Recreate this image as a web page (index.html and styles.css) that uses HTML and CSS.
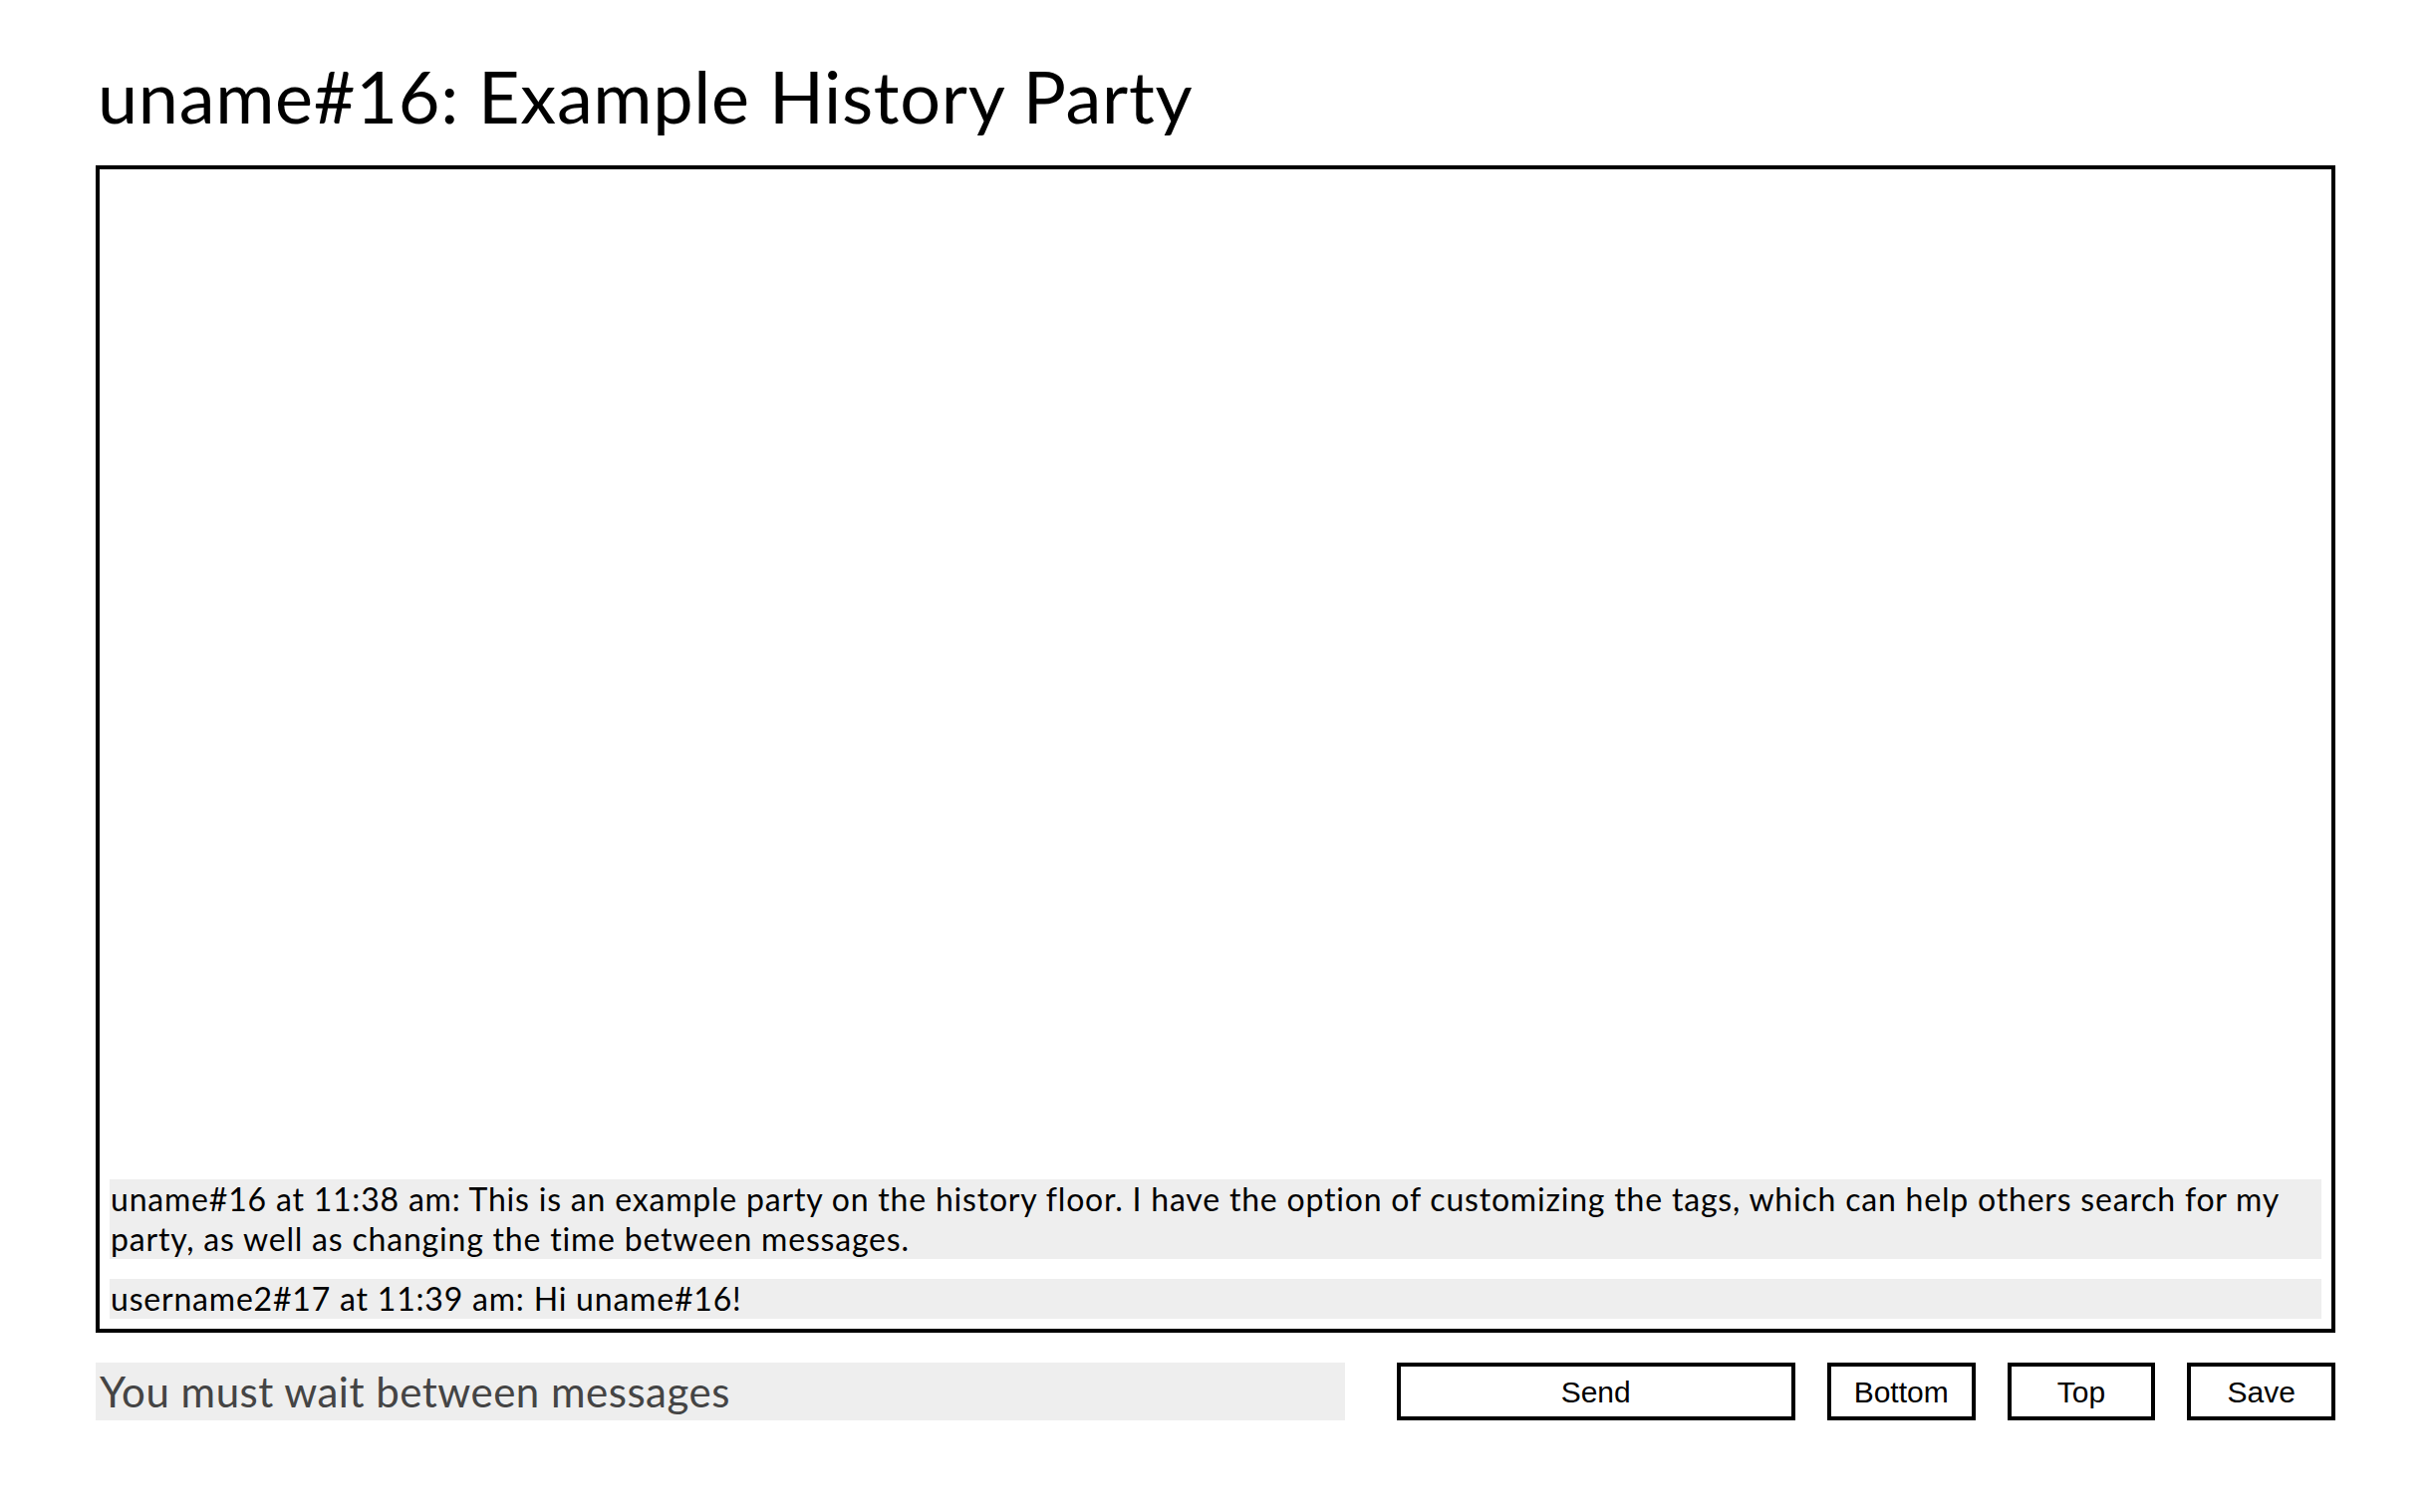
FILE: index.html
```html
<!DOCTYPE html>
<html lang="en">
<head>
<meta charset="utf-8">
<title>uname#16: Example History Party</title>
<link rel="stylesheet" href="styles.css">
</head>
<body>
<main class="page">
  <h1 class="title">uname#16: Example History Party</h1>
  <section class="chat">
    <div class="msg">uname#16 at 11:38 am: This is an example party on the history floor. I have the option of customizing the tags, which can help others search for my party, as well as changing the time between messages.</div>
    <div class="msg">username2#17 at 11:39 am: Hi uname#16!</div>
  </section>
  <div class="controls">
    <div class="entry">You must wait between messages</div>
    <button class="btn btn-send">Send</button>
    <button class="btn">Bottom</button>
    <button class="btn">Top</button>
    <button class="btn">Save</button>
  </div>
</main>
</body>
</html>
```

FILE: styles.css
```css
html, body {
  margin: 0;
  padding: 0;
  background: #fff;
}

.page {
  width: 2248px;
  margin-left: 96px;
  font-family: Lato, "Noto Sans", sans-serif;
  color: #000;
}

.title {
  margin: 0;
  padding-top: 54px;
  padding-left: 2px;
  height: 166px;
  box-sizing: border-box;
  font-size: 72px;
  font-weight: 400;
  line-height: 84px;
  letter-spacing: 0.7px;
}

.chat {
  height: 1172px;
  box-sizing: border-box;
  border: 4px solid #000;
  padding: 10px;
  display: flex;
  flex-direction: column;
  justify-content: flex-end;
  gap: 20px;
}

.msg {
  background: #eee;
  font-size: 32px;
  line-height: 40px;
  letter-spacing: 0.8px;
  padding: 0 1px;
}

.controls {
  display: flex;
  margin-top: 30px;
  height: 58px;
  align-items: stretch;
}

.entry {
  width: 1256px;
  background: #eee;
  color: #444;
  font-size: 42px;
  line-height: 58px;
  letter-spacing: 0.5px;
  padding-left: 4px;
  box-sizing: border-box;
  margin-right: 52px;
}

.btn {
  width: 149px;
  margin-left: 32px;
  background: #fff;
  border: 4px solid #000;
  box-sizing: border-box;
  font-family: "Liberation Sans", Arial, sans-serif;
  font-size: 30px;
  color: #000;
  padding: 2px 0 0;
  border-radius: 0;
}

.btn-send {
  width: 401px;
  margin-left: 0;
}
```
